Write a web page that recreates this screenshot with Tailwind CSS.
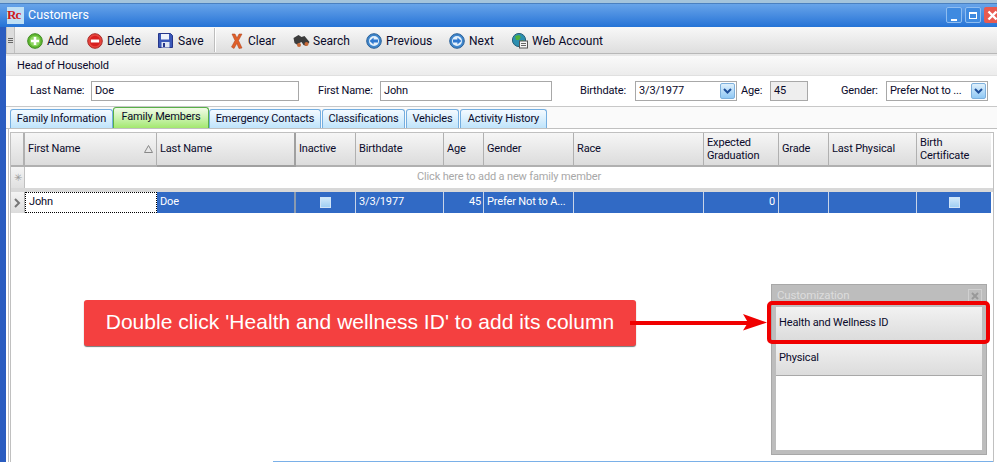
<!DOCTYPE html>
<html>
<head>
<meta charset="utf-8">
<script src="https://cdn.jsdelivr.net/npm/@tailwindcss/browser@4"></script>
</head>
<body class="w-[997px] h-[462px] overflow-hidden bg-white">
<div class="relative w-[997px] h-[462px] overflow-hidden flex flex-col font-['Roboto','Noto_Sans',sans-serif] text-[11px] tracking-[-0.15px] text-[#0a0a2a] bg-gradient-to-r from-[#2a5cc0] to-[#3a78dc]">
  <!-- title bar -->
  <div class="h-[27px] shrink-0 flex items-center border-t-[3px] border-t-[#a4c4dc] shadow-[inset_0_1px_0_#4a80c0] bg-gradient-to-b from-[#6aa6ea] to-[#2473d6] pl-[7px] pr-0">
    <div class="w-[17px] h-[17px] bg-[#bfe0f5] text-[#d01818] font-bold text-[13px] leading-[15px] font-['Liberation_Serif',serif] tracking-[-1px]">Rc</div>
    <span class="ml-[4px] text-white text-[12.5px] tracking-normal">Customers</span>
    <div class="ml-auto flex gap-[3px] items-center">
      <div class="w-[16px] h-[16px] rounded-[2px] bg-[#3f8ae0] border border-[#8fbdf0] flex items-end justify-center pb-[1px]"><div class="w-[6px] h-[2px] bg-white"></div></div>
      <div class="w-[16px] h-[16px] rounded-[2px] bg-[#3f8ae0] border border-[#8fbdf0] flex items-center justify-center"><div class="w-[8px] h-[7px] border border-white border-t-2"></div></div>
      <div class="w-[13px] h-[16px] rounded-l-[2px] bg-[#e85a50] flex items-center justify-end overflow-hidden">
        <svg class="shrink-0 -mr-[1px]" width="11" height="11" viewBox="0 0 11 11"><path d="M1.5 1.5L9.5 9.5M9.5 1.5L1.5 9.5" stroke="#fff" stroke-width="2.4"/></svg>
      </div>
    </div>
  </div>
  <!-- client area -->
  <div class="flex-1 ml-[6px] flex flex-col min-h-0 bg-white">
    <!-- toolbar -->
    <div class="h-[27px] shrink-0 flex items-center bg-gradient-to-b from-[#f8f8f8] to-[#dedede] border-b border-[#b8b8b8] tracking-normal">
      <div class="w-[9px] h-[26px] bg-[#dcdcdc] border-x border-[#c0c0c0] flex flex-col justify-center items-center gap-[1px]">
        <div class="w-[5px] h-px bg-[#666]"></div><div class="w-[5px] h-px bg-[#666]"></div><div class="w-[5px] h-px bg-[#666]"></div>
      </div>
      <div class="ml-[12px] w-[60px] pt-px flex items-center gap-[4px] text-[12px]">
        <svg width="16" height="16" viewBox="0 0 16 16"><circle cx="8" cy="8" r="7.3" fill="#62b832" stroke="#3c8a1e"/><circle cx="8" cy="8" r="5.2" fill="#8dd660"/><path d="M8 4v8M4 8h8" stroke="#fff" stroke-width="2.6"/></svg>
        <span>Add</span>
      </div>
      <div class="w-[71px] pt-px flex items-center gap-[4px] text-[12px]">
        <svg width="16" height="16" viewBox="0 0 16 16"><circle cx="8" cy="8" r="7.3" fill="#e8443c" stroke="#a82a28"/><circle cx="8" cy="8" r="5.2" fill="#d81f1f"/><path d="M3.8 8h8.4" stroke="#fff" stroke-width="3"/></svg>
        <span>Delete</span>
      </div>
      <div class="w-[56px] pt-px flex items-center gap-[5px] text-[12px]">
        <svg width="15" height="15" viewBox="0 0 15 15"><path d="M0.5 0.5h12l2 2v12h-14z" fill="#3a58b8" stroke="#26368a"/><rect x="3" y="1" width="8" height="5.5" fill="#eef2fa"/><rect x="3.5" y="9" width="8" height="5.5" fill="#dfe6f4"/><rect x="5" y="10" width="2" height="4" fill="#26368a"/></svg>
        <span>Save</span>
      </div>
      <div class="w-px h-[24px] bg-[#bdbdbd] border-r border-white box-content"></div>
      <div class="ml-[15px] w-[62px] pt-px flex items-center gap-[5px] text-[12px]">
        <svg width="12" height="16" viewBox="0 0 12 16"><path d="M1 1l3 0 2 4 2-4 3 0-3.5 6.5L11 15l-3 0.5-2.2-5L3 15.5 0.5 14 4 7.5z" fill="#e0602a" stroke="#a83c18" stroke-width=".5"/></svg>
        <span>Clear</span>
      </div>
      <div class="w-[73px] pt-px flex items-center gap-[3px] text-[12px]">
        <svg width="17" height="14" viewBox="0 0 17 14"><path d="M0.5 4l5-3 3 2 3-1 5 6-3 4-3-1-2-3-2 1-2 2-3-2z" fill="#3c3c3c"/><circle cx="6" cy="11" r="2" fill="#c86a38"/><circle cx="13.5" cy="10" r="2" fill="#c86a38"/></svg>
        <span>Search</span>
      </div>
      <div class="w-[83px] pt-px flex items-center gap-[4px] text-[12px]">
        <svg width="16" height="16" viewBox="0 0 16 16"><circle cx="8" cy="8" r="7.3" fill="#3f86cc" stroke="#2a6098"/><circle cx="8" cy="8" r="5" fill="#e4f0fa"/><path d="M3.6 8l4-3.6v2.2h4.4v2.8H7.6v2.2z" fill="#2e78d0"/></svg>
        <span>Previous</span>
      </div>
      <div class="w-[63px] pt-px flex items-center gap-[4px] text-[12px]">
        <svg width="16" height="16" viewBox="0 0 16 16"><circle cx="8" cy="8" r="7.3" fill="#3f86cc" stroke="#2a6098"/><circle cx="8" cy="8" r="5" fill="#e4f0fa"/><path d="M12.4 8l-4-3.6v2.2H4v2.8h4.4v2.2z" fill="#2e78d0"/></svg>
        <span>Next</span>
      </div>
      <div class="pt-px flex items-center gap-[4px] text-[12px]">
        <svg width="16" height="16" viewBox="0 0 16 16"><circle cx="7" cy="7" r="6.6" fill="#2c8fb0" stroke="#2a6078"/><path d="M3 3l4-1 2 2-2 3-3 0zM8 8l3-1 1 2-2 3-2-1z" fill="#4fb03a"/><rect x="7.5" y="8" width="8" height="7" fill="#f4f4f4" stroke="#555"/><path d="M9 10.5h5M9 12.5h5" stroke="#666"/></svg>
        <span>Web Account</span>
      </div>
    </div>
    <div class="h-[2px] shrink-0 bg-[#e8e8e8]"></div>
    <!-- header band -->
    <div class="h-[20px] shrink-0 flex items-center pl-[11px] pt-px bg-gradient-to-b from-[#fafafa] to-[#ececec] border-b border-[#e0e0e0]">Head of Household</div>
    <!-- form row -->
    <div class="h-[31px] shrink-0 flex items-center bg-white border-b border-[#c8c8c8]">
      <span class="ml-[24px] w-[61px]">Last Name:</span>
      <div class="w-[208px] h-[20px] border border-[#a8a8a8] pl-[3px] leading-[18px]">Doe</div>
      <span class="ml-[19px] w-[62px]">First Name:</span>
      <div class="w-[172px] h-[20px] border border-[#a8a8a8] pl-[3px] leading-[18px]">John</div>
      <span class="ml-[28px] w-[55px]">Birthdate:</span>
      <div class="w-[102px] h-[20px] border border-[#a8a8a8] pl-[3px] leading-[18px] flex justify-between">3/3/1977
        <div class="w-[15px] h-[16px] mt-px mr-px rounded-[2px] bg-gradient-to-b from-[#dff0fc] to-[#8fc8f4] border border-[#7eb0dc] flex items-center justify-center"><svg width="9" height="7" viewBox="0 0 9 7"><path d="M1 1l3.5 3.5L8 1" fill="none" stroke="#1f4f9a" stroke-width="2"/></svg></div>
      </div>
      <span class="ml-[4px] w-[29px]">Age:</span>
      <div class="w-[38px] h-[20px] border border-[#a8a8a8] bg-[#eeeeee] pl-[3px] leading-[18px]">45</div>
      <span class="ml-[33px] w-[45px]">Gender:</span>
      <div class="w-[102px] h-[20px] border border-[#a8a8a8] pl-[3px] leading-[18px] flex justify-between whitespace-nowrap">Prefer Not to ...
        <div class="w-[15px] h-[16px] mt-px mr-px rounded-[2px] bg-gradient-to-b from-[#dff0fc] to-[#8fc8f4] border border-[#7eb0dc] flex items-center justify-center"><svg width="9" height="7" viewBox="0 0 9 7"><path d="M1 1l3.5 3.5L8 1" fill="none" stroke="#1f4f9a" stroke-width="2"/></svg></div>
      </div>
    </div>
    <!-- tabs -->
    <div class="h-[22px] shrink-0 flex items-end pl-[4px] bg-[#fafafa] border-b border-[#c0c0c0] whitespace-nowrap">
      <div class="w-[103px] h-[19px] rounded-t-[3px] border border-b-0 border-[#74aee0] bg-gradient-to-b from-[#f4faff] to-[#bfe4fb] flex items-center justify-center">Family Information</div>
      <div class="w-[96px] h-[21px] rounded-t-[3px] border border-b-0 border-[#58b048] bg-gradient-to-b from-[#f2fbe8] to-[#a3e86e] flex items-center justify-center pb-[2px]">Family Members</div>
      <div class="w-[112px] h-[19px] rounded-t-[3px] border border-b-0 border-[#74aee0] bg-gradient-to-b from-[#f4faff] to-[#bfe4fb] flex items-center justify-center">Emergency Contacts</div>
      <div class="ml-px w-[83px] h-[19px] rounded-t-[3px] border border-b-0 border-[#74aee0] bg-gradient-to-b from-[#f4faff] to-[#bfe4fb] flex items-center justify-center">Classifications</div>
      <div class="ml-px w-[53px] h-[19px] rounded-t-[3px] border border-b-0 border-[#74aee0] bg-gradient-to-b from-[#f4faff] to-[#bfe4fb] flex items-center justify-center">Vehicles</div>
      <div class="ml-px w-[87px] h-[19px] rounded-t-[3px] border border-b-0 border-[#74aee0] bg-gradient-to-b from-[#f4faff] to-[#bfe4fb] flex items-center justify-center">Activity History</div>
    </div>
    <!-- grid panel -->
    <div class="flex-1 min-h-0 pt-[3px] ml-[2px] pl-px border-l border-[#c0c0c0] bg-white">
      <div class="h-full border-t border-r border-l border-[#c0c0c0] w-[984px]">
        <!-- header row -->
        <div class="grid grid-cols-[14px_132px_139px_60px_88px_40px_90px_130px_75px_50px_88px_74px] h-[34px] bg-white">
          <div class="bg-gradient-to-b from-[#f6f6f6] to-[#dcdcdc] border-b-2 border-r-2 border-[#b0b0b0]"></div>
          <div class="bg-gradient-to-b from-[#f6f6f6] to-[#dcdcdc] border-b-2 border-r border-[#b0b0b0] flex items-center pl-[3px] justify-between pr-[3px]">First Name<svg width="9" height="8" viewBox="0 0 9 8"><path d="M4.5 0.5L8.5 7.5H0.5z" fill="none" stroke="#888"/></svg></div>
          <div class="bg-gradient-to-b from-[#f6f6f6] to-[#dcdcdc] border-b-2 border-r-2 border-[#a0a0a0] flex items-center pl-[3px]">Last Name</div>
          <div class="bg-gradient-to-b from-[#f6f6f6] to-[#dcdcdc] border-b-2 border-r border-[#b0b0b0] flex items-center pl-[3px]">Inactive</div>
          <div class="bg-gradient-to-b from-[#f6f6f6] to-[#dcdcdc] border-b-2 border-r border-[#b0b0b0] flex items-center pl-[3px]">Birthdate</div>
          <div class="bg-gradient-to-b from-[#f6f6f6] to-[#dcdcdc] border-b-2 border-r border-[#b0b0b0] flex items-center pl-[3px]">Age</div>
          <div class="bg-gradient-to-b from-[#f6f6f6] to-[#dcdcdc] border-b-2 border-r border-[#b0b0b0] flex items-center pl-[3px]">Gender</div>
          <div class="bg-gradient-to-b from-[#f6f6f6] to-[#dcdcdc] border-b-2 border-r border-[#b0b0b0] flex items-center pl-[3px]">Race</div>
          <div class="bg-gradient-to-b from-[#f6f6f6] to-[#dcdcdc] border-b-2 border-r border-[#b0b0b0] flex items-center pl-[3px] leading-[13px]">Expected<br>Graduation</div>
          <div class="bg-gradient-to-b from-[#f6f6f6] to-[#dcdcdc] border-b-2 border-r border-[#b0b0b0] flex items-center pl-[3px]">Grade</div>
          <div class="bg-gradient-to-b from-[#f6f6f6] to-[#dcdcdc] border-b-2 border-r border-[#b0b0b0] flex items-center pl-[3px]">Last Physical</div>
          <div class="bg-gradient-to-b from-[#f6f6f6] to-[#dcdcdc] border-b-2 border-[#b0b0b0] flex items-center pl-[3px] leading-[13px]">Birth<br>Certificate</div>
        </div>
        <!-- new row -->
        <div class="h-[21px] flex border-b-[4px] border-[#d8d8d8] box-content">
          <div class="w-[14px] bg-gradient-to-b from-[#f4f4f4] to-[#e0e0e0] border-r border-[#c0c0c0] flex items-center justify-center text-[10px] text-[#999]">✳</div>
          <div class="flex-1 flex items-center justify-center text-[#a8a8a8]">Click here to add a new family member</div>
        </div>
        <!-- data row -->
        <div class="grid grid-cols-[14px_132px_139px_60px_88px_40px_90px_130px_75px_50px_88px_74px] h-[21px] text-white">
          <div class="bg-gradient-to-b from-[#f4f4f4] to-[#dcdcdc] border-r border-[#b0b0b0] flex items-center justify-center"><svg width="7" height="10" viewBox="0 0 7 10"><path d="M1 1l4 4-4 4" fill="none" stroke="#777" stroke-width="2"/></svg></div>
          <div class="bg-white text-[#0a0a2a] flex items-center pl-[3px] border border-dotted border-black">John</div>
          <div class="bg-[#316ac5] border-r-2 border-[#8a9ab0] flex items-center pl-[3px]">Doe</div>
          <div class="bg-[#316ac5] border-r border-[#c8d4e8] flex items-center justify-center"><div class="w-[11px] h-[11px] bg-gradient-to-b from-[#cfe8fa] to-[#a0d0f4] border border-[#cfe4f8]"></div></div>
          <div class="bg-[#316ac5] border-r border-[#c8d4e8] flex items-center pl-[3px]">3/3/1977</div>
          <div class="bg-[#316ac5] border-r border-[#c8d4e8] flex items-center justify-end pr-[2px]">45</div>
          <div class="bg-[#316ac5] border-r border-[#c8d4e8] flex items-center pl-[3px] whitespace-nowrap overflow-hidden">Prefer Not to A...</div>
          <div class="bg-[#316ac5] border-r border-[#c8d4e8]"></div>
          <div class="bg-[#316ac5] border-r border-[#c8d4e8] flex items-center justify-end pr-[3px]">0</div>
          <div class="bg-[#316ac5] border-r border-[#c8d4e8]"></div>
          <div class="bg-[#316ac5] border-r border-[#c8d4e8]"></div>
          <div class="bg-[#316ac5] flex items-center justify-center"><div class="w-[11px] h-[11px] bg-gradient-to-b from-[#cfe8fa] to-[#a0d0f4] border border-[#cfe4f8]"></div></div>
        </div>
      </div>
    </div>
  </div>
  <!-- bottom edge sliver -->
  <div class="absolute left-[273px] top-[461px] w-[720px] h-px bg-[#7ab0e8]"></div>
  <!-- floating customization window -->
  <div class="absolute left-[771px] top-[284px] w-[216px] h-[171px] bg-[#bdbdbd] border border-[#a8a8a8] px-[4px] pb-[4px] flex flex-col">
    <div class="h-[22px] shrink-0 flex items-center justify-between text-[#dcdcdc] pl-[1px] text-[11.5px]">Customization
      <div class="w-[14px] h-[14px] border border-[#d0d0d0] flex items-center justify-center"><svg width="8" height="8" viewBox="0 0 8 8"><path d="M1 1l6 6M7 1l-6 6" stroke="#999" stroke-width="2"/></svg></div>
    </div>
    <div class="flex-1 bg-white">
      <div class="h-[34px] flex items-center pl-[3px] bg-gradient-to-b from-[#f2f2f2] to-[#dcdcdc] border-b border-[#c8c8c8]">Health and Wellness ID</div>
      <div class="h-[35px] flex items-center pl-[3px] bg-gradient-to-b from-[#f2f2f2] to-[#dcdcdc] border-b border-[#a8a8a8]">Physical</div>
    </div>
  </div>
  <!-- highlight box -->
  <div class="absolute left-[767px] top-[301px] w-[223px] h-[43px] rounded-[5px] border-[4px] border-[#f00000]"></div>
  <!-- callout -->
  <div class="absolute left-[84px] top-[300px] w-[552px] h-[46px] rounded-[3px] bg-[#f44040] flex items-center justify-center text-white text-[21px] tracking-[0.04px] pb-[2px] font-['Liberation_Sans',sans-serif] shadow-[0_1px_1px_#777]">Double click 'Health and wellness ID' to add its column</div>
  <!-- arrow -->
  <svg class="absolute left-[630px] top-[312px]" width="138" height="22" viewBox="0 0 138 22"><path d="M0 11H120" stroke="#f00000" stroke-width="4"/><path d="M113 2L137 10.5L113 18.5L118 10.5z" fill="#f00000"/></svg>
</div>
</body>
</html>
